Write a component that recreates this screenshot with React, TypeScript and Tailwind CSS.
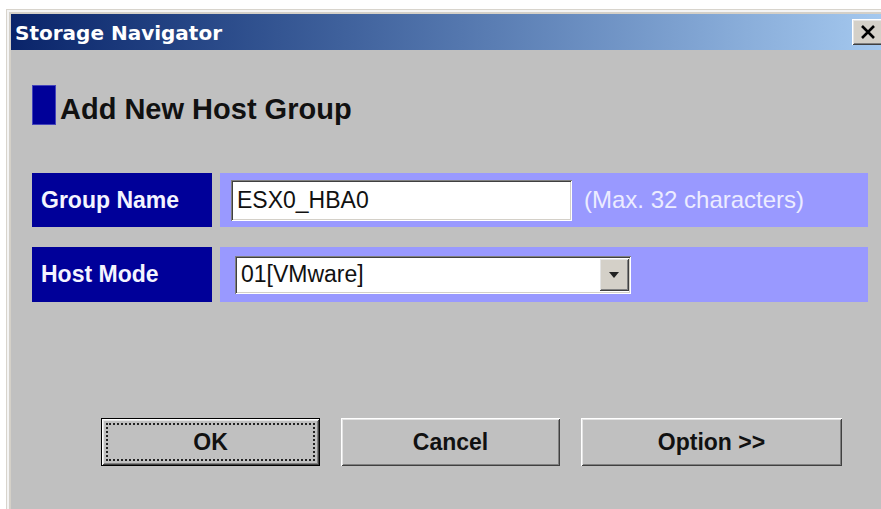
import React from 'react';

// classic 3D bevels
const raised =
  'shadow-[inset_1px_1px_0_#ffffff,inset_-1px_-1px_0_#404040,inset_2px_2px_0_#e4e4e4,inset_-2px_-2px_0_#808080]';
const sunken =
  'shadow-[inset_1px_1px_0_#808080,inset_-1px_-1px_0_#ffffff,inset_2px_2px_0_#404040,inset_-2px_-2px_0_#d4d0c8]';

const sans = "font-['Liberation_Sans',Arial,sans-serif]";

type FieldProps = { label: string; children: React.ReactNode; tall?: boolean };

const Field: React.FC<FieldProps> = ({ label, children, tall }) => (
  <div className={`flex gap-2 ${tall ? 'h-[55px]' : 'h-[54px]'}`}>
    <div className="flex w-[180px] items-center bg-[#000099] pl-[9px] text-[23px] font-bold text-[#f4f4ff]">
      {label}
    </div>
    <div className="flex flex-1 items-center bg-[#9999ff]">{children}</div>
  </div>
);

type ButtonProps = { label: string; primary?: boolean; wide?: boolean };

const DialogButton: React.FC<ButtonProps> = ({ label, primary, wide }) => (
  <button
    className={`h-[48px] ${wide ? 'w-[261px]' : 'w-[219px]'} bg-[#c0c0c0] text-[23px] font-bold text-[#111] ${
      primary ? 'border border-black p-[4px]' : 'p-[5px]'
    } ${raised}`}
  >
    <span
      className={`flex h-full w-full items-center justify-center ${
        primary ? 'border-2 border-dotted border-[#222]' : ''
      }`}
    >
      {label}
    </span>
  </button>
);

export default function App() {
  return (
    <div className={`h-[509px] w-[881px] overflow-hidden bg-white pl-[6px] pt-[9px] ${sans}`}>
      <div className="h-[540px] w-[882px] border-l border-t border-[#d8d4cc]">
        <div className="h-full border-l-2 border-t-2 border-[#f4f4f4]">
          <div className="flex h-full flex-col border-l-2 border-t-2 border-[#d4d0c8]">
            {/* title bar */}
            <div className="flex h-[36px] items-center justify-between bg-gradient-to-r from-[#0a246a] to-[#a6caf0] pl-[4px] pr-[4px]">
              <span className="pt-[2px] font-['DejaVu_Sans',sans-serif] text-[20px] font-bold leading-none text-white">
                Storage Navigator
              </span>
              <div className={`flex h-[26px] w-[32px] items-center justify-center bg-[#d4d0c8] ${raised}`}>
                <svg width="16" height="14" viewBox="0 0 16 14">
                  <path d="M2 1 L14 13 M14 1 L2 13" stroke="#000" strokeWidth="2.6" />
                </svg>
              </div>
            </div>

            {/* body */}
            <div className="flex flex-1 flex-col bg-[#c0c0c0] pl-[21px]">
              <div className="mt-[35px] flex h-[40px] items-center gap-[4px]">
                <div className="h-[40px] w-[24px] border border-[#4444bb] bg-[#000099]" />
                <h1 className="mt-[9px] text-[29px] font-bold text-[#111]">Add New Host Group</h1>
              </div>

              <div className="mt-[48px] flex w-[836px] flex-col gap-[20px]">
                <Field label="Group Name">
                  <div className={`ml-[11px] flex h-[41px] w-[341px] items-center bg-white pl-[6px] text-[23px] text-[#111] ${sunken}`}>
                    ESX0_HBA0
                  </div>
                  <span className="ml-[12px] text-[24px] text-[#ececff]">(Max. 32 characters)</span>
                </Field>
                <Field label="Host Mode" tall>
                  <div className={`ml-[15px] flex h-[38px] w-[396px] items-center justify-between bg-white p-[2px] pl-[6px] text-[23px] text-[#111] ${sunken}`}>
                    <span>01[VMware]</span>
                    <div className={`flex h-[33px] w-[30px] items-center justify-center bg-[#d4d0c8] ${raised}`}>
                      <svg width="10" height="6" viewBox="0 0 10 6">
                        <path d="M0 0 H10 L5 6 Z" fill="#222" />
                      </svg>
                    </div>
                  </div>
                </Field>
              </div>

              <div className="ml-[69px] mt-[116px] flex gap-[21px]">
                <DialogButton label="OK" primary />
                <DialogButton label="Cancel" />
                <DialogButton label="Option >>" wide />
              </div>
            </div>
          </div>
        </div>
      </div>
    </div>
  );
}
